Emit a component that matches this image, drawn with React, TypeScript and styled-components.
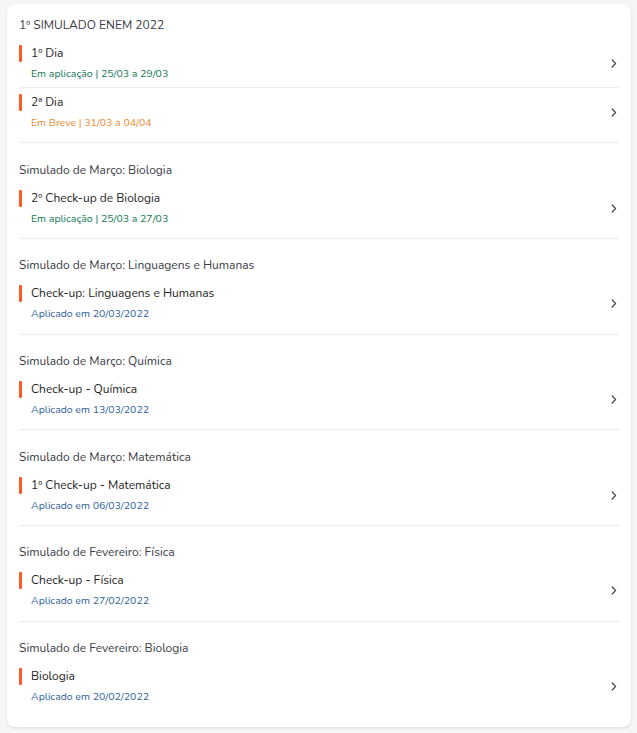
import React from "react";
import styled, { createGlobalStyle } from "styled-components";

const GlobalStyle = createGlobalStyle`
  html, body { margin: 0; padding: 0; }
  body {
    background: #f6f6f8;
    font-family: "Nunito", "Lato", "Noto Sans", sans-serif;
    -webkit-font-smoothing: antialiased;
  }
`;

type Status = "live" | "soon" | "done";

interface Exam {
  title: string;
  sub: string;
  status: Status;
}

interface Group {
  name: string;
  items: Exam[];
}

const data: Group[] = [
  {
    name: "1º SIMULADO ENEM 2022",
    items: [
      { title: "1º Dia", sub: "Em aplicação | 25/03 a 29/03", status: "live" },
      { title: "2ª Dia", sub: "Em Breve | 31/03 a 04/04", status: "soon" },
    ],
  },
  {
    name: "Simulado de Março: Biologia",
    items: [{ title: "2º Check-up de Biologia", sub: "Em aplicação | 25/03 a 27/03", status: "live" }],
  },
  {
    name: "Simulado de Março: Linguagens e Humanas",
    items: [{ title: "Check-up: Linguagens e Humanas", sub: "Aplicado em 20/03/2022", status: "done" }],
  },
  {
    name: "Simulado de Março: Química",
    items: [{ title: "Check-up - Química", sub: "Aplicado em 13/03/2022", status: "done" }],
  },
  {
    name: "Simulado de Março: Matemática",
    items: [{ title: "1º Check-up - Matemática", sub: "Aplicado em 06/03/2022", status: "done" }],
  },
  {
    name: "Simulado de Fevereiro: Física",
    items: [{ title: "Check-up - Física", sub: "Aplicado em 27/02/2022", status: "done" }],
  },
  {
    name: "Simulado de Fevereiro: Biologia",
    items: [{ title: "Biologia", sub: "Aplicado em 20/02/2022", status: "done" }],
  },
];

const statusColor: Record<Status, string> = {
  live: "#127852",
  soon: "#ea8a2e",
  done: "#2e5f9c",
};

const Page = styled.div`
  padding: 4px 6px 6px 7px;
`;

const Card = styled.div`
  background: #ffffff;
  border-radius: 8px;
  box-shadow: 0 1px 3px rgba(20, 20, 40, 0.12);
  padding: 0 12px 10.6px;
`;

const Section = styled.section`
  padding: 17.5px 0 6.2px;
  border-bottom: 1px solid #ececf1;
  &:first-child { padding-top: 12px; }
  &:last-child { border-bottom: none; }
`;

const SectionTitle = styled.h2`
  margin: 0 0 5px;
  font-size: 12px;
  line-height: 18px;
  font-weight: 400;
  color: #3b3b45;
`;

const Row = styled.div`
  display: grid;
  grid-template-columns: 3px 1fr auto;
  grid-template-rows: 17px 17px;
  column-gap: 9px;
  row-gap: 3px;
  align-items: center;
  padding: 6px 2px 5px 0;
  border-bottom: 1px solid #ececf1;
  cursor: pointer;
  &:last-child { border-bottom: none; }
`;

const Bar = styled.span`
  grid-column: 1;
  grid-row: 1;
  align-self: stretch;
  background: #ff5a22;
  border-radius: 1px;
`;

const Title = styled.span`
  grid-column: 2;
  grid-row: 1;
  font-size: 12px;
  line-height: 17px;
  color: #1e1e24;
`;

const Sub = styled.span<{ $status: Status }>`
  grid-column: 2;
  grid-row: 2;
  font-size: 10.5px;
  line-height: 17px;
  color: ${(p) => statusColor[p.$status]};
`;

const Chevron = styled.svg`
  grid-column: 3;
  grid-row: 1 / span 2;
  width: 6px;
  height: 9px;
`;

const ChevronIcon = () => (
  <Chevron viewBox="0 0 6 9" fill="none">
    <path d="M1.2 1 L4.6 4.5 L1.2 8" stroke="#4a4a52" strokeWidth="1.2" strokeLinecap="round" strokeLinejoin="round" />
  </Chevron>
);

export default function App() {
  return (
    <>
      <GlobalStyle />
      <Page>
        <Card>
          {data.map((g) => (
            <Section key={g.name}>
              <SectionTitle>{g.name}</SectionTitle>
              {g.items.map((it) => (
                <Row key={it.title}>
                  <Bar />
                  <Title>{it.title}</Title>
                  <Sub $status={it.status}>{it.sub}</Sub>
                  <ChevronIcon />
                </Row>
              ))}
            </Section>
          ))}
        </Card>
      </Page>
    </>
  );
}
